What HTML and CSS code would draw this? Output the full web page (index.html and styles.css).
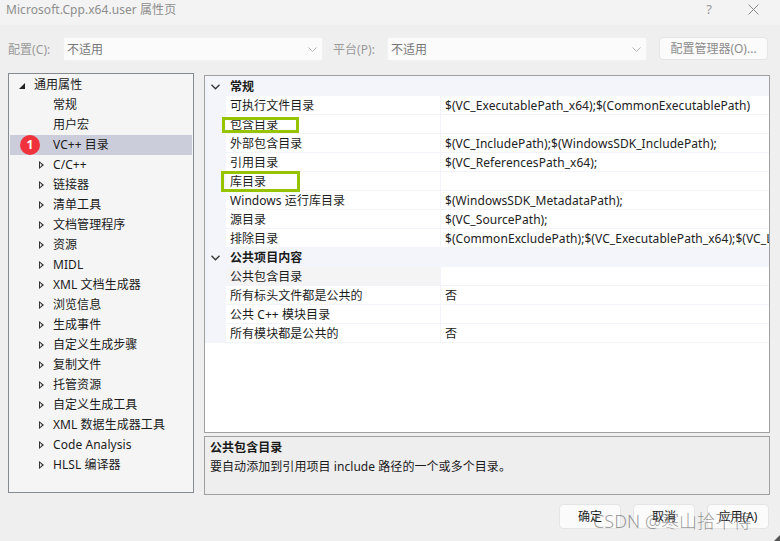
FILE: index.html
```html
<!DOCTYPE html>
<html lang="en">
<head>
    <meta charset="UTF-8">
    <title>Microsoft.Cpp.x64.user 属性页</title>
    <link rel="stylesheet" href="styles.css">
</head>
<body>
<div class="dialog">
    <header class="titlebar">
        <span class="title">Microsoft.Cpp.x64.user 属性页</span>
        <span class="help">?</span>
        <svg class="close" width="11" height="11" viewBox="0 0 11 11"><path d="M.5.5l10 10M10.5.5l-10 10" stroke="#8a8a8a" fill="none"/></svg>
    </header>

    <div class="toolbar">
        <label class="field-label label-config">配置(C):</label>
        <div class="select select-config">
            <span>不适用</span>
            <svg width="9" height="5" viewBox="0 0 9 5"><path d="M.5.5l4 4 4-4" stroke="#b5b5b5" fill="none"/></svg>
        </div>
        <label class="field-label label-platform">平台(P):</label>
        <div class="select select-platform">
            <span>不适用</span>
            <svg width="9" height="5" viewBox="0 0 9 5"><path d="M.5.5l4 4 4-4" stroke="#b5b5b5" fill="none"/></svg>
        </div>
        <button class="btn btn-config">配置管理器(O)...</button>
    </div>

    <div class="panels">
        <nav class="tree">
            <div class="tree-row"><svg class="arrow" width="6" height="6" viewBox="0 0 6 6"><path d="M6 0v6H0z" fill="#222"/></svg><span class="root-label">通用属性</span></div>
            <div class="tree-row leaf">常规</div>
            <div class="tree-row leaf">用户宏</div>
            <div class="tree-row leaf selected">VC++ 目录</div>
            <div class="tree-row branch">C/C++</div>
            <div class="tree-row branch">链接器</div>
            <div class="tree-row branch">清单工具</div>
            <div class="tree-row branch">文档管理程序</div>
            <div class="tree-row branch">资源</div>
            <div class="tree-row branch">MIDL</div>
            <div class="tree-row branch">XML 文档生成器</div>
            <div class="tree-row branch">浏览信息</div>
            <div class="tree-row branch">生成事件</div>
            <div class="tree-row branch">自定义生成步骤</div>
            <div class="tree-row branch">复制文件</div>
            <div class="tree-row branch">托管资源</div>
            <div class="tree-row branch">自定义生成工具</div>
            <div class="tree-row branch">XML 数据生成器工具</div>
            <div class="tree-row branch">Code Analysis</div>
            <div class="tree-row branch">HLSL 编译器</div>
        </nav>

        <div class="right">
            <section class="grid">
                <div class="category">
                    <svg width="9" height="6" viewBox="0 0 9 6"><path d="M.5.8l4 4 4-4" stroke="#333" stroke-width="1.3" fill="none"/></svg>
                    <b>常规</b>
                </div>
                <div class="row"><span class="name">可执行文件目录</span><span class="value">$(VC_ExecutablePath_x64);$(CommonExecutablePath)</span></div>
                <div class="row"><span class="name">包含目录</span><span class="value"></span></div>
                <div class="row"><span class="name">外部包含目录</span><span class="value">$(VC_IncludePath);$(WindowsSDK_IncludePath);</span></div>
                <div class="row"><span class="name">引用目录</span><span class="value">$(VC_ReferencesPath_x64);</span></div>
                <div class="row"><span class="name">库目录</span><span class="value"></span></div>
                <div class="row"><span class="name">Windows 运行库目录</span><span class="value">$(WindowsSDK_MetadataPath);</span></div>
                <div class="row"><span class="name">源目录</span><span class="value">$(VC_SourcePath);</span></div>
                <div class="row"><span class="name">排除目录</span><span class="value">$(CommonExcludePath);$(VC_ExecutablePath_x64);$(VC_LibraryPath_x64)</span></div>
                <div class="category">
                    <svg width="9" height="6" viewBox="0 0 9 6"><path d="M.5.8l4 4 4-4" stroke="#333" stroke-width="1.3" fill="none"/></svg>
                    <b>公共项目内容</b>
                </div>
                <div class="row current"><span class="name">公共包含目录</span><span class="value"></span></div>
                <div class="row"><span class="name">所有标头文件都是公共的</span><span class="value">否</span></div>
                <div class="row"><span class="name">公共 C++ 模块目录</span><span class="value"></span></div>
                <div class="row"><span class="name">所有模块都是公共的</span><span class="value">否</span></div>
            </section>
            <section class="desc">
                <b>公共包含目录</b>
                <p>要自动添加到引用项目 include 路径的一个或多个目录。</p>
            </section>
        </div>
    </div>

    <footer class="actions">
        <button class="btn btn-action">确定</button>
        <button class="btn btn-action">取消</button>
        <button class="btn btn-action">应用(A)</button>
    </footer>
</div>

<!-- annotations drawn on top of the screenshot -->
<div class="badge">1</div>
<div class="mark mark-include"></div>
<div class="mark mark-lib"></div>
<div class="watermark">CSDN @寒山拾不得</div>
<svg class="grip" width="6" height="6" viewBox="0 0 6 6"><path d="M6 0v6H0z" fill="#555"/></svg>
</body>
</html>
```

FILE: styles.css
```css
* {
    box-sizing: border-box;
}

html, body {
    margin: 0;
    height: 100%;
}

body {
    position: relative;
    overflow: hidden;
    background-color: #efefef;
    color: #1b1b1b;
    font: 12px/19px "Noto Sans", "Noto Sans CJK SC", sans-serif;
    letter-spacing: 0.06px;
}

.dialog {
    display: flex;
    flex-direction: column;
    height: 541px;
}

.titlebar {
    display: flex;
    align-items: center;
    height: 25px;
    flex-shrink: 0;
    padding: 0 21px 6px 6px;
    background-color: #f3f3f3;
    color: #8e8e8e;
}

.title {
    flex: 1;
}

.help {
    margin-right: 36px;
    font-size: 13px;
    color: #999;
}

.close {
    display: block;
}

.toolbar {
    display: flex;
    align-items: center;
    height: 48px;
    flex-shrink: 0;
    padding: 0 12px 0 8px;
}

.field-label {
    flex-shrink: 0;
    color: #9a9a9a;
}

.label-config {
    width: 55px;
}

.label-platform {
    width: 54px;
    margin-left: 10px;
}

.select {
    display: flex;
    align-items: center;
    justify-content: space-between;
    height: 24px;
    padding: 0 5px 0 3px;
    background-color: #fbfbfb;
    border: 1px solid #f1f1f1;
    border-radius: 2px;
    color: #777;
}

.select-config {
    width: 260px;
}

.select-platform {
    width: 260px;
}

.btn {
    font: inherit;
    border: 1px solid #e5e5e5;
    border-radius: 4px;
    background-color: #fbfbfb;
    color: #1b1b1b;
    padding: 0;
}

.btn-config {
    width: 109px;
    height: 23px;
    margin: -1px 0 0 auto;
    color: #8d8d8d;
}

.panels {
    display: flex;
    gap: 10px;
    padding: 0 10px 0 8px;
}

.tree {
    flex-shrink: 0;
    width: 186px;
    height: 420px;
    padding: 1px 1px 0;
    background-color: #f5f5f5;
    border: 1px solid #868a91;
}

.tree-row {
    position: relative;
    height: 20px;
    line-height: 20px;
    white-space: nowrap;
}

.tree-row .arrow {
    position: absolute;
    left: 9px;
    top: 8px;
}

.root-label {
    padding-left: 24px;
}

.leaf, .branch {
    padding-left: 43px;
}

.selected {
    background-color: #cbcdda;
}

.branch::before {
    content: "";
    position: absolute;
    left: 29px;
    top: 6px;
    width: 0;
    height: 0;
    border-left: 5px solid #333;
    border-top: 4.5px solid transparent;
    border-bottom: 4.5px solid transparent;
}

.branch::after {
    content: "";
    position: absolute;
    left: 30px;
    top: 8px;
    width: 0;
    height: 0;
    border-left: 2.8px solid #f5f5f5;
    border-top: 2.5px solid transparent;
    border-bottom: 2.5px solid transparent;
}

.right {
    display: flex;
    flex-direction: column;
    gap: 3px;
    width: 566px;
    flex-shrink: 0;
    margin-top: 2px;
}

.grid {
    height: 358px;
    padding-top: 1px;
    background-color: #fff;
    border: 1px solid #a0a0a0;
    box-shadow: inset 0 1px 0 #f3f5fa;
}

.category {
    display: flex;
    align-items: center;
    height: 19px;
    background-color: #f3f5fa;
}

.category svg {
    margin: 0 0 0 6px;
}

.category b {
    margin-left: 10px;
}

.row {
    display: flex;
    height: 19px;
    padding-left: 21px;
    background: linear-gradient(#f3f5fa, #f3f5fa) left / 21px 100% no-repeat;
}

.name {
    width: 215px;
    padding-left: 4px;
    border-bottom: 1px solid #f2f4fa;
    border-right: 1px solid #f2f4fa;
    white-space: nowrap;
}

.value {
    flex: 1;
    min-width: 0;
    padding-left: 4px;
    border-bottom: 1px solid #f2f4fa;
    white-space: nowrap;
    overflow: hidden;
    color: #222;
}

.current .name {
    background-color: #f4f4f4;
}

.desc {
    height: 59px;
    padding: 1px 5px;
    background-color: #eeeeee;
    border: 1px solid #a0a0a0;
}

.desc b {
    display: block;
}

.desc p {
    margin: 0;
}

.actions {
    display: flex;
    justify-content: flex-end;
    gap: 12px;
    padding: 9px 11px 0 0;
}

.btn-action {
    width: 62px;
    height: 25px;
}

.badge {
    position: absolute;
    left: 20px;
    top: 135px;
    width: 20px;
    height: 20px;
    border-radius: 50%;
    background-color: #f0323c;
    color: #fff;
    font: bold 12px/20px "Noto Sans", sans-serif;
    text-align: center;
}

.mark {
    position: absolute;
    border: 3px solid #97c400;
}

.mark-include {
    left: 222px;
    top: 117px;
    width: 77px;
    height: 16px;
}

.mark-lib {
    left: 221px;
    top: 171px;
    width: 79px;
    height: 21px;
}

.watermark {
    position: absolute;
    left: 593px;
    top: 509px;
    font: 18px/24px "Noto Sans", "Noto Sans CJK SC", sans-serif;
    font-weight: 300;
    color: rgba(90, 90, 90, 0.6);
    white-space: nowrap;
}

.grip {
    position: absolute;
    right: 0;
    bottom: 0;
}
```
